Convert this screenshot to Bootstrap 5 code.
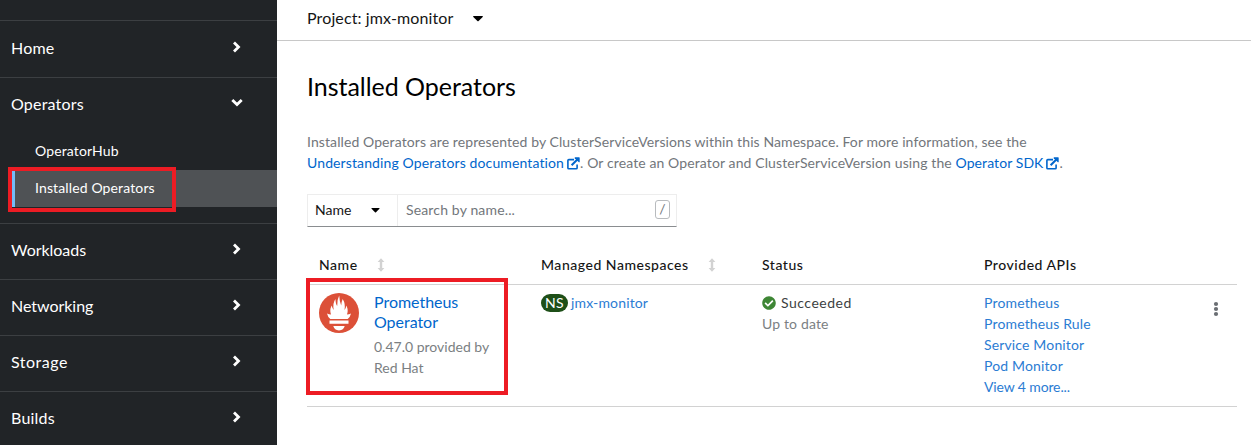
<!DOCTYPE html>
<html lang="en">
<head>
<meta charset="utf-8">
<meta name="viewport" content="width=device-width, initial-scale=1">
<title>Installed Operators</title>
<link href="https://cdn.jsdelivr.net/npm/bootstrap@5.3.0/dist/css/bootstrap.min.css" rel="stylesheet">
<style>
  body { font: 14px/21px Lato, "Noto Sans", sans-serif; letter-spacing: .15px; color: #151515; background: #fff; height: 445px; overflow: hidden; }
  a { color: #06c; text-decoration: none; }
  svg { display: block; }
  .side { width: 277px; height: 445px; background: #212427; color: #fff; overflow: hidden; padding-top: 20px; }
  .side-group { border-top: 1px solid #3c3f42; }
  .side-toggle { height: 55px; padding: 0 34px 5px 11px; font-size: 16px; color: #fff; }
  .side-toggle svg { margin-top: -1px; }
  .side-toggle svg[width="9"] { margin-right: 2px; }
  .side-first { height: 56px; padding-bottom: 3px; }
  .ls-wide { letter-spacing: .2px; }
  .ls-none { letter-spacing: -.03px; }
  .side-sub { padding-bottom: 16px; }
  .side-link { height: 37px; margin-left: 12px; padding: 0 0 2px 23px; color: #fff; letter-spacing: .13px; }
  .side-link.current { background: #4f5255; border-left: 3px solid #73bcf7; padding-left: 20px; }
  .mark-box { position: absolute; border: 4px solid #ed1c24; pointer-events: none; }
  .mark-nav { left: 8px; top: -3px; width: 168px; height: 45px; }
  .mark-row { left: -1px; top: -7px; width: 202px; height: 117px; }
  .project-bar { height: 41px; border-bottom: 1px solid #c8c8c8; padding: 0 30px 5px; font-size: 16px; letter-spacing: .12px; }
  .project-bar svg { margin: 2px 0 0 20px; }
  .content { padding: 30px 14px 0 30px; }
  h1 { font-size: 25px; line-height: 30px; letter-spacing: -.03px; margin: 0; color: #000; }
  .intro { margin-top: 30px; color: #72767b; }
  .intro .l1 { letter-spacing: .092px; }
  .intro .l2 { letter-spacing: .12px; }
  .intro .l2 span { letter-spacing: .11px; }
  .intro svg { display: inline-block; margin: -2px 0 0 3px; }
  .intro a:last-child { letter-spacing: .08px; }
  .filter { width: 370px; height: 33px; margin-top: 21px; border: 1px solid #ededed; border-bottom-color: #8a8d90; }
  .filter-name { width: 90px; padding: 0 17px 2px 7px; border-right: 1px solid #ededed; letter-spacing: .02px; }
  .filter-name svg { margin-top: 2px; }
  .filter-search { padding: 0 6px 2px 8px; color: #72767b; }
  .slash { width: 15px; height: 19px; border: 1px solid #b8bbbe; border-radius: 3px; line-height: 16px; text-align: center; letter-spacing: 0; }
  .op-grid { display: grid; grid-template-columns: 222px 221px 222px 221px 1fr; }
  .op-grid > div { padding-left: 12px; }
  .op-head { height: 57px; padding-top: 27px; font-weight: 500; letter-spacing: .52px; }
  .op-head svg { display: inline-block; margin: -2px 0 0 19px; }
  .op-body { height: 123px; padding-top: 8px; border-bottom: 1px solid #d2d2d2; border-top: 1px solid #d2d2d2; }
  .op-body > .op-text { margin-top: -1px; }
  .op-name { width: 130px; margin: -1px 0 0 15px; line-height: 20px; }
  .op-name a { display: block; font-size: 16px; letter-spacing: -.03px; }
  .op-name p { color: #7b7f83; line-height: 21px; margin: 4px 0 0; letter-spacing: 0; }
  .ns { background: #1e4f18; color: #fff; border-radius: 20px; width: 27px; height: 18px; line-height: 18px; text-align: center; letter-spacing: .3px; margin-top: 2px; }
  .ns + a { margin-left: 3px; }
  .api a { color: #2b7cd3; letter-spacing: .15px; }
  .api a.more { letter-spacing: -.13px; }
  .done { letter-spacing: .5px; color: #3c3f42; }
  .done svg { margin-right: 5px; }
  .fresh { color: #7b7f83; }
  .kebab { margin: 8px 0 0 8px; }
</style>
</head>
<body class="d-flex">
<svg class="d-none">
  <symbol id="right" viewBox="0 0 9 12"><path d="M2 1.500 6.500 6 2 10.500" fill="none" stroke="#fff" stroke-width="2.800"/></symbol>
  <symbol id="down" viewBox="0 0 12 9"><path d="M1.300 2 6 6.600 10.700 2" fill="none" stroke="#fff" stroke-width="2.800"/></symbol>
  <symbol id="caret" viewBox="0 0 10 6"><path d="M.6 0h8.800q.8.2.3.9L5.600 5.100q-.6.5-1.200 0L.3.9Q-.2.2.6 0z"/></symbol>
  <symbol id="sort" viewBox="0 0 8 14"><path d="M4 .3 7.400 4H5.200v6h2.200L4 13.700.6 10h2.200V4H.6z" fill="#d2d2d2"/></symbol>
  <symbol id="ext" viewBox="0 0 13 13"><path d="M7 2.600H1.800q-.9 0-.9.9v7.400q0 .9.9.9h7.400q.9 0 .9-.9V7.600" fill="none" stroke="#06c" stroke-width="1.600"/><path d="m4.600 8.200 6-6" stroke="#06c" stroke-width="2.100"/><path d="M8 .3h4.100q.6 0 .6.6V5q-.3.6-.9.2L7.800 1.200Q7.500.5 8 .3z" fill="#06c"/></symbol>
</svg>

<nav class="side flex-shrink-0">
  <div class="side-group"><a class="side-toggle side-first ls-wide d-flex align-items-center justify-content-between" href="#">Home<svg width="9" height="12"><use href="#right"/></svg></a></div>
  <div class="side-group">
    <a class="side-toggle ls-wide d-flex align-items-center justify-content-between" href="#">Operators<svg width="12" height="9"><use href="#down"/></svg></a>
    <div class="side-sub">
      <a class="side-link d-flex align-items-center" href="#">OperatorHub</a>
      <div class="position-relative">
        <a class="side-link current d-flex align-items-center" href="#">Installed Operators</a>
        <div class="mark-box mark-nav"></div>
      </div>
    </div>
  </div>
  <div class="side-group"><a class="side-toggle ls-none d-flex align-items-center justify-content-between" href="#">Workloads<svg width="9" height="12"><use href="#right"/></svg></a></div>
  <div class="side-group"><a class="side-toggle ls-none d-flex align-items-center justify-content-between" href="#">Networking<svg width="9" height="12"><use href="#right"/></svg></a></div>
  <div class="side-group"><a class="side-toggle d-flex align-items-center justify-content-between" style="letter-spacing:.5px" href="#">Storage<svg width="9" height="12"><use href="#right"/></svg></a></div>
  <div class="side-group"><a class="side-toggle ls-wide d-flex align-items-center justify-content-between" href="#">Builds<svg width="9" height="12"><use href="#right"/></svg></a></div>
</nav>

<main class="flex-grow-1">
  <div class="project-bar d-flex align-items-center">Project: jmx-monitor<svg width="10" height="6"><use href="#caret"/></svg></div>
  <div class="content">
    <h1 class="fw-normal">Installed Operators</h1>
    <div class="intro text-nowrap">
      <div class="l1">Installed Operators are represented by ClusterServiceVersions within this Namespace. For more information, see the</div>
      <div class="l2"><a href="#">Understanding Operators documentation<svg width="13" height="13"><use href="#ext"/></svg></a><span>. Or create an Operator and ClusterServiceVersion using the </span><a href="#">Operator SDK<svg width="13" height="13"><use href="#ext"/></svg></a>.</div>
    </div>
    <div class="filter d-flex">
      <div class="filter-name d-flex align-items-center justify-content-between">Name<svg width="9" height="5"><use href="#caret"/></svg></div>
      <div class="filter-search flex-grow-1 d-flex align-items-center justify-content-between">Search by name...<span class="slash">/</span></div>
    </div>
    <div class="op-grid op-head">
      <div>Name<svg width="8" height="14"><use href="#sort"/></svg></div>
      <div>Managed Namespaces<svg width="8" height="14"><use href="#sort"/></svg></div>
      <div>Status</div>
      <div>Provided APIs</div>
    </div>
    <div class="op-grid op-body position-relative">
      <div class="d-flex">
        <svg width="40" height="40" viewBox="0 0 40 40" class="flex-shrink-0">
          <circle cx="20" cy="20" r="20" fill="#dc5038"/>
          <path d="M8 20.500q2 1 4 1-1.700-4.500.7-9 .8 3.500 2 4.500Q13.500 10 16.500 6q0 5 1.700 7Q18 6.500 20.200 2.500q.3 6 2 10 .3-4 1.500-6.500 3 5 1.800 11 1.500-1.500 1.800-4.500 2.400 4.500.7 9 2 0 4-1-1 4-3.300 5.500H11.300Q9 24.500 8 20.500zM10.500 27.500h19v3.300h-19zM14.300 33h11.400q-1 4.200-5.700 4.400-4.700-.2-5.700-4.400z" fill="#fff"/>
        </svg>
        <div class="op-name"><a href="#">Prometheus<br>Operator</a><p>0.47.0 provided by<br>Red Hat</p></div>
      </div>
      <div class="op-text api d-flex align-items-start"><span class="ns">NS</span><a href="#">jmx-monitor</a></div>
      <div class="op-text">
        <div class="done d-flex align-items-center"><svg width="14" height="14" viewBox="0 0 512 512"><path fill="#3e8635" d="M504 256c0 136.967-111.033 248-248 248S8 392.967 8 256 119.033 8 256 8s248 111.033 248 248zM227.314 387.314l184-184c6.248-6.248 6.248-16.379 0-22.627l-22.627-22.627c-6.248-6.249-16.379-6.249-22.628 0L216 308.118l-70.059-70.059c-6.248-6.248-16.379-6.248-22.628 0l-22.627 22.627c-6.248 6.248-6.248 16.379 0 22.627l104 104c6.249 6.249 16.379 6.249 22.628.001z"/></svg>Succeeded</div>
        <div class="fresh">Up to date</div>
      </div>
      <div class="op-text api d-flex flex-column"><a href="#">Prometheus</a><a href="#">Prometheus Rule</a><a href="#">Service Monitor</a><a href="#">Pod Monitor</a><a class="more" href="#">View 4 more...</a></div>
      <div><svg width="6" height="16" viewBox="0 0 6 16" class="kebab" fill="#6a6e73"><circle cx="3" cy="3" r="2.100"/><circle cx="3" cy="8" r="2.100"/><circle cx="3" cy="13" r="2.100"/></svg></div>
      <div class="mark-box mark-row p-0"></div>
    </div>
  </div>
</main>
<script src="https://cdn.jsdelivr.net/npm/bootstrap@5.3.0/dist/js/bootstrap.bundle.min.js"></script>
</body>
</html>
